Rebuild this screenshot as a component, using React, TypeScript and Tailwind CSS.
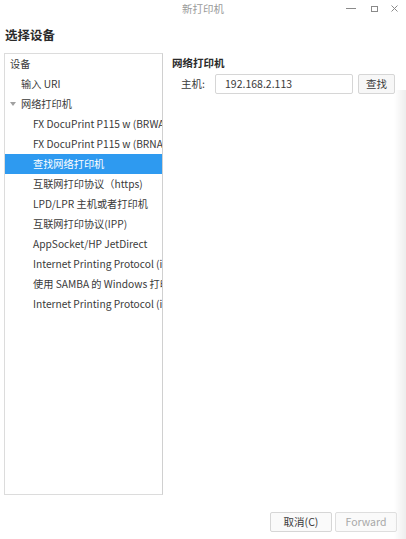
import React from "react";

const items: { text: string; indent: number; selected?: boolean; arrow?: boolean }[] = [
  { text: "设备", indent: 5 },
  { text: "输入 URI", indent: 16 },
  { text: "网络打印机", indent: 16, arrow: true },
  { text: "FX DocuPrint P115 w (BRWA8C8D9E7", indent: 28 },
  { text: "FX DocuPrint P115 w (BRNA8C8D9E7", indent: 28 },
  { text: "查找网络打印机", indent: 28, selected: true },
  { text: "互联网打印协议（https)", indent: 28 },
  { text: "LPD/LPR 主机或者打印机", indent: 28 },
  { text: "互联网打印协议(IPP)", indent: 28 },
  { text: "AppSocket/HP JetDirect", indent: 28 },
  { text: "Internet Printing Protocol (ipps)", indent: 28 },
  { text: "使用 SAMBA 的 Windows 打印机", indent: 28 },
  { text: "Internet Printing Protocol (ipp14)", indent: 28 },
];

export default function App() {
  return (
    <div
      className="relative w-[406px] h-[539px] bg-white overflow-hidden text-[#3a3a3a]"
      style={{ fontFamily: '"Noto Sans CJK SC", "Noto Sans", sans-serif' }}
    >
      {/* title bar */}
      <div className="relative h-[17px] flex items-center justify-center">
        <span className="text-[10.5px] leading-none text-[#9a9a9a] mt-[1px]">新打印机</span>
        <div className="absolute right-0 top-0 h-[17px] flex items-center text-[#8a8a8a]">
          <span className="w-[10px] h-px bg-[#8a8a8a] mr-[15px]" />
          <span className="w-[7px] h-[6px] border border-[#8a8a8a] mr-[13px]" />
          <svg width="7" height="7" viewBox="0 0 7 7" className="mr-[8px]">
            <path d="M0.5 0.5L6.5 6.5M6.5 0.5L0.5 6.5" stroke="#8a8a8a" strokeWidth="1" />
          </svg>
        </div>
      </div>

      {/* heading */}
      <div className="pl-[5px] pt-[9px] h-[36px] text-[12.5px] font-bold text-[#2a2a2a] leading-[18px]">
        选择设备
      </div>

      <div className="flex">
        {/* left list */}
        <div className="ml-[4px] w-[159px] h-[442px] border-l border-t border-b border-[#dcdcdc] border-r border-r-[#d0d0d0] border-r-dashed overflow-hidden">
          {items.map((it, i) => (
            <div
              key={i}
              className={`relative h-[20px] leading-[20px] text-[10.2px] whitespace-nowrap overflow-hidden ${
                it.selected ? "bg-[#2e9af0] text-white" : "text-[#3a3a3a]"
              }`}
              style={{ paddingLeft: it.indent }}
            >
              {it.arrow && (
                <svg
                  width="6"
                  height="4"
                  viewBox="0 0 6 4"
                  className="absolute left-[5px] top-[8px]"
                >
                  <path d="M0 0H6L3 4Z" fill="#a0a0a0" />
                </svg>
              )}
              {it.text}
            </div>
          ))}
        </div>

        {/* right content */}
        <div className="flex-1 pl-[9px]">
          <div className="h-[20px] leading-[20px] text-[10.5px] font-bold text-[#2a2a2a]">网络打印机</div>
          <div className="flex items-center mt-[1px]">
            <span className="w-[43px] pl-[9px] text-[10.5px] text-[#3a3a3a]">主机:</span>
            <div className="w-[138px] h-[20px] border border-[#d6d6d6] rounded-[2px] flex items-center pl-[9px] text-[10.5px] text-[#3a3a3a]">
              192.168.2.113
            </div>
            <div className="ml-[5px] w-[37px] h-[20px] border border-[#d6d6d6] rounded-[2px] bg-[#f7f7f7] flex items-center justify-center text-[10.5px] text-[#3a3a3a]">
              查找
            </div>
          </div>
        </div>
      </div>

      {/* bottom buttons */}
      <div className="flex justify-end pr-[9px] mt-[17px] gap-[3px]">
        <div className="w-[62px] h-[20px] border border-[#d6d6d6] rounded-[2px] bg-[#fafafa] flex items-center justify-center text-[10.5px] text-[#3a3a3a]">
          取消(C)
        </div>
        <div className="w-[62px] h-[20px] border border-[#dedede] rounded-[2px] bg-[#fafafa] flex items-center justify-center text-[10.5px] text-[#a8a8a8]">
          Forward
        </div>
      </div>

      {/* right edge shadow */}
      <div className="absolute right-0 top-[90px] bottom-0 w-[12px] bg-gradient-to-r from-transparent to-[#ededed] pointer-events-none" />
    </div>
  );
}
